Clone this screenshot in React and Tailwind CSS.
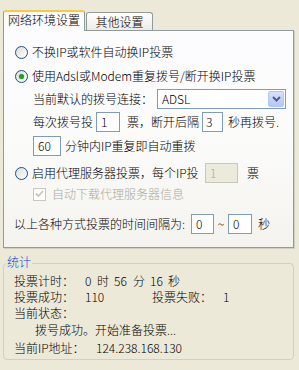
import React from "react";

function Radio({ checked }) {
  return (
    <div className="relative w-[13px] h-[13px] rounded-full border border-[#1C5180] bg-gradient-to-br from-[#DCDCD7] to-white flex items-center justify-center shrink-0">
      {checked && (
        <div className="w-[5px] h-[5px] rounded-full bg-[#21A121] shadow-[0_0_1px_#5DD35D]" />
      )}
    </div>
  );
}

function Box({ w, children, disabled, pl = "pl-[4px]" }) {
  return (
    <div
      className={
        "h-[20px] border flex items-center shrink-0 " +
        pl +
        " " +
        (disabled
          ? "border-[#C9C7BA] bg-[#EBEADB] text-[#ACA899]"
          : "border-[#7F9DB9] bg-white text-black")
      }
      style={{ width: w }}
    >
      {children}
    </div>
  );
}

export default function App() {
  return (
    <div className="w-[299px] h-[370px] bg-[#ECE9D8] overflow-hidden text-[12px] leading-[16px] font-light text-black font-['Noto_Sans_CJK_SC','Noto_Sans',sans-serif]">
      <div className="pt-[10px] pl-[3px]">
        {/* tabs */}
        <div className="flex items-end h-[20px]">
          <div className="relative z-10 w-[82px] h-[21px] -mb-px bg-[#FCFCFE] border-x border-t-2 border-x-[#919B9C] border-t-[#FFC83C] rounded-t-[3px] flex items-start justify-center whitespace-nowrap">
            网络环境设置
          </div>
          <div className="ml-[1px] w-[67px] h-[18px] border-x border-t border-[#919B9C] rounded-t-[3px] bg-gradient-to-b from-white to-[#ECEBE6] flex items-start justify-center pt-[1px] whitespace-nowrap">
            其他设置
          </div>
        </div>

        {/* panel */}
        <div className="w-[291px] h-[218px] border border-[#919B9C] shadow-[1px_1px_0_#D0CEBF] bg-gradient-to-b from-[#FCFCFE] via-[#FBFBFA] to-[#F4F3EE] pl-[10px] flex flex-col whitespace-nowrap">
          <div className="mt-[11px] h-[20px] flex items-center">
            <div className="ml-[1px]">
              <Radio />
            </div>
            <span className="ml-[4px]">不换IP或软件自动换IP投票</span>
          </div>
          <div className="mt-[4px] h-[20px] flex items-center">
            <div className="ml-[1px]">
              <Radio checked />
            </div>
            <span className="ml-[4px]">使用Adsl或Modem重复拨号/断开换IP投票</span>
          </div>
          <div className="mt-[3px] h-[20px] flex items-center ml-[19px]">
            <span className="w-[124px]">当前默认的拨号连接：</span>
            <div className="w-[129px] h-[20px] border border-[#7F9DB9] bg-white flex items-center justify-between pl-[4px] pr-[1px]">
              <span>ADSL</span>
              <div className="w-[16px] h-[16px] rounded-[2px] border border-[#B4C7F4] bg-gradient-to-b from-[#D6E1FC] to-[#B3C6F4] flex items-center justify-center">
                <svg width="9" height="6" viewBox="0 0 9 6">
                  <path d="M1 1 L4.5 4.5 L8 1" fill="none" stroke="#4D6185" strokeWidth="2" />
                </svg>
              </div>
            </div>
          </div>
          <div className="mt-[3px] h-[20px] flex items-center ml-[19px]">
            <span className="w-[63px]">每次拨号投</span>
            <Box w="24px">1</Box>
            <span className="ml-[7px] w-[75px]">票，断开后隔</span>
            <Box w="21px" pl="pl-[3px]">3</Box>
            <span className="ml-[5px]">秒再拨号.</span>
          </div>
          <div className="mt-[4px] h-[20px] flex items-center ml-[19px]">
            <Box w="28px">60</Box>
            <span className="ml-[4px]">分钟内IP重复即自动重拨</span>
          </div>
          <div className="mt-[7px] h-[20px] flex items-center">
            <div className="ml-[1px]">
              <Radio />
            </div>
            <span className="ml-[4px] w-[173px]">启用代理服务器投票，每个IP投</span>
            <Box w="33px" disabled>1</Box>
            <span className="ml-[9px]">票</span>
          </div>
          <div className="mt-[3px] h-[16px] flex items-center ml-[19px]">
            <div className="w-[13px] h-[13px] border border-[#CAC8BB] bg-white flex items-center justify-center">
              <svg width="9" height="8" viewBox="0 0 9 8">
                <path d="M1 3.5 L3.5 6 L8 1" fill="none" stroke="#CAC8BB" strokeWidth="1.8" />
              </svg>
            </div>
            <span className="ml-[6px] text-[#ACA899]">自动下载代理服务器信息</span>
          </div>
          <div className="mt-[12px] h-[20px] flex items-center">
            <span className="w-[177px]">以上各种方式投票的时间间隔为:</span>
            <Box w="23px">0</Box>
            <span className="w-[14px] text-center">~</span>
            <Box w="24px">0</Box>
            <span className="ml-[6px]">秒</span>
          </div>
        </div>

        {/* stats */}
        <div className="relative mt-[15px] w-[291px] h-[97px] border border-[#D0D0BF] rounded-[4px] pt-[9px] pl-[10px] whitespace-nowrap">
          <span className="absolute left-[2px] top-[-10px] px-[1px] bg-[#ECE9D8] text-[#0046D5]">统计</span>
          <div className="h-[16px] flex items-center">
            <span className="w-[71px]">投票计时：</span>
            <span className="w-[12px]">0</span>
            <span className="w-[17px]">时</span>
            <span className="w-[19px]">56</span>
            <span className="w-[17px]">分</span>
            <span className="w-[18px]">16</span>
            <span>秒</span>
          </div>
          <div className="h-[16px] flex items-center">
            <span className="w-[71px]">投票成功：</span>
            <span className="w-[67px]">110</span>
            <span className="w-[71px]">投票失败：</span>
            <span>1</span>
          </div>
          <div className="h-[16px] flex items-center">
            <span>当前状态：</span>
          </div>
          <div className="mt-[1px] h-[16px] flex items-center pl-[21px]">
            <span>拨号成功。开始准备投票...</span>
          </div>
          <div className="mt-[2px] h-[16px] flex items-center">
            <span className="w-[82px]">当前IP地址：</span>
            <span>124.238.168.130</span>
          </div>
        </div>
      </div>
    </div>
  );
}
